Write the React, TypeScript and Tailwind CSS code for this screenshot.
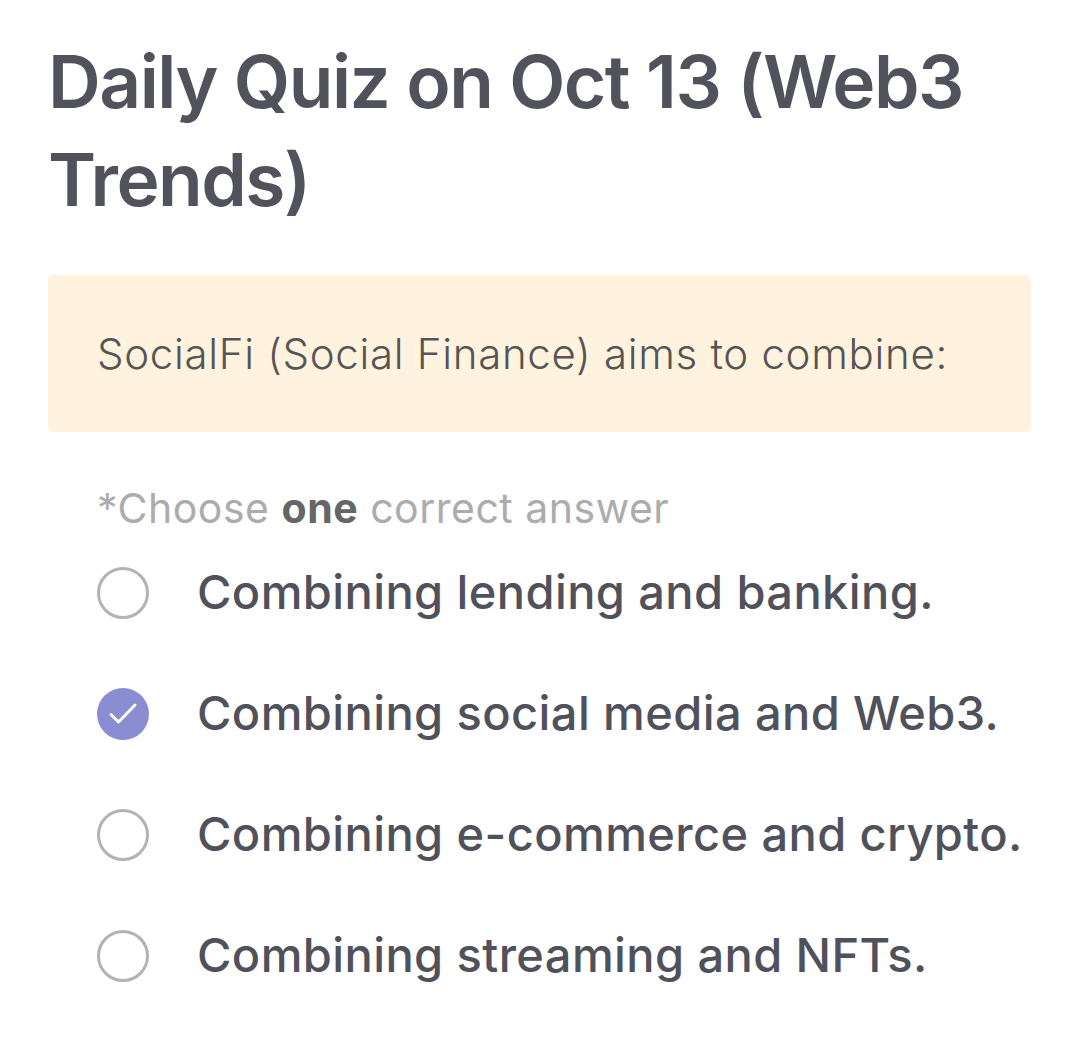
import { useState } from 'react'

const options = [
  'Combining lending and banking.',
  'Combining social media and Web3.',
  'Combining e-commerce and crypto.',
  'Combining streaming and NFTs.',
]

function Radio({ checked }: { checked: boolean }) {
  if (checked) {
    return (
      <span className="h-[52px] w-[52px] shrink-0 rounded-full bg-[#8b8dd3]">
        <svg width="52" height="52" viewBox="0 0 52 52" fill="none" stroke="#fff" strokeWidth="3" strokeLinecap="round" strokeLinejoin="round">
          <path d="M14 26.5l7.5 7.5L38 17" />
        </svg>
      </span>
    )
  }
  return <span className="h-[52px] w-[52px] shrink-0 rounded-full border-[3px] border-[#b3b3b3]" />
}

export default function App() {
  const [selected, setSelected] = useState(1)

  return (
    <div className="min-h-[1043px] w-[1080px] bg-white pl-[48px] pr-[49px] pt-[33px] font-['Inter',sans-serif]">
      <h1 className="text-[73px] font-semibold leading-[98px] tracking-[-1.5px] text-[#51525c]">
        Daily Quiz on Oct 13 (Web3 Trends)
      </h1>

      <div className="mt-[46px] flex h-[157px] items-center rounded-[5px] bg-[#fff3e0] px-[49px]">
        <p className="text-[42px] font-light tracking-[0.7px] text-[#555]">SocialFi (Social Finance) aims to combine:</p>
      </div>

      <p className="mt-[52px] h-[48px] pl-[49px] text-[41px] leading-[48px] tracking-[0.5px] text-[#acacac]">
        *Choose <span className="font-bold text-[#666]">one</span> correct answer
      </p>

      <div className="pl-[49px]">
        {options.map((text, i) => (
          <button
            key={text}
            type="button"
            onClick={() => setSelected(i)}
            className="flex h-[121px] w-full items-center gap-[48px] text-left"
          >
            <Radio checked={selected === i} />
            <span className="text-[47px] font-medium tracking-[0.4px] text-[#50515b]">{text}</span>
          </button>
        ))}
      </div>
    </div>
  )
}
